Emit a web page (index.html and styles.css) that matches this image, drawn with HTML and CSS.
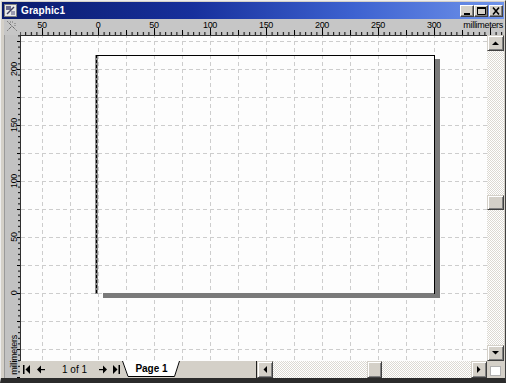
FILE: index.html
```html
<!DOCTYPE html>
<html>
<head>
<meta charset="utf-8">
<title>Graphic1</title>
<link rel="stylesheet" href="styles.css">
</head>
<body>
<div class="window">
  <div class="titlebar">
    <svg class="app-icon" width="13" height="13" viewBox="0 0 13 13">
      <rect x="0.5" y="0.5" width="12" height="12" fill="#e8e8e8" stroke="#808080"/>
      <rect x="2" y="2" width="5" height="4" fill="#6d6d8f"/>
      <path d="M3 10 L10 3" stroke="#404060" stroke-width="1.5"/>
      <rect x="7" y="7" width="4" height="4" fill="#9a9ab0"/>
    </svg>
    <span class="title">Graphic1</span>
    <div class="caption-buttons">
      <button class="cap-btn" aria-label="Minimize">
        <svg width="12" height="10" viewBox="0 0 12 10"><rect x="3" y="7" width="6" height="2" fill="#000"/></svg>
      </button>
      <button class="cap-btn" aria-label="Maximize">
        <svg width="12" height="10" viewBox="0 0 12 10"><path d="M2.5 1.5h8v7h-8z" fill="none" stroke="#000"/><rect x="2" y="1" width="9" height="2" fill="#000"/></svg>
      </button>
      <button class="cap-btn close" aria-label="Close">
        <svg width="12" height="10" viewBox="0 0 12 10"><path d="M3 1.5 L9 8.5 M9 1.5 L3 8.5" stroke="#000" stroke-width="1.6"/></svg>
      </button>
    </div>
  </div>

  <div class="main">
    <div class="corner">
      <svg width="16" height="16" viewBox="0 0 16 16">
        <path d="M3.5 2.5 L12.5 11.5 M3.5 11.5 L8 7" stroke="#404040" stroke-dasharray="1 1" fill="none"/>
        <path d="M6 3 h4 M11 4 v3" stroke="#707070" stroke-dasharray="1 1" fill="none"/>
      </svg>
    </div>

    <div class="hruler">
      <svg width="484" height="16" viewBox="0 0 484 16" class="ruler-svg">
        <defs>
          <pattern id="hs" x="78" y="0" width="5.6" height="16" patternUnits="userSpaceOnUse"><rect width="1" height="16" fill="#000"/></pattern>
          <pattern id="hm" x="78" y="0" width="28" height="16" patternUnits="userSpaceOnUse"><rect width="1" height="16" fill="#000"/></pattern>
          <pattern id="hb" x="78" y="0" width="56" height="16" patternUnits="userSpaceOnUse"><rect width="1" height="16" fill="#000"/></pattern>
        </defs>
        <rect x="0" y="13" width="484" height="3" fill="url(#hs)"/>
        <rect x="0" y="11" width="484" height="5" fill="url(#hm)"/>
        <rect x="0" y="9" width="484" height="7" fill="url(#hb)"/>
        <g class="rl" text-anchor="middle">
          <text x="22" y="8.5">50</text>
          <text x="78" y="8.5">0</text>
          <text x="134" y="8.5">50</text>
          <text x="190" y="8.5">100</text>
          <text x="246" y="8.5">150</text>
          <text x="302" y="8.5">200</text>
          <text x="358" y="8.5">250</text>
          <text x="414" y="8.5">300</text>
        </g>
        <text class="rl" x="483" y="8.5" text-anchor="end">millimeters</text>
      </svg>
    </div>

    <div class="vruler">
      <svg width="16" height="343" viewBox="0 0 16 343" class="ruler-svg">
        <defs>
          <pattern id="vs" x="0" y="258" width="16" height="5.6" patternUnits="userSpaceOnUse"><rect width="16" height="1" fill="#000"/></pattern>
          <pattern id="vm" x="0" y="258" width="16" height="28" patternUnits="userSpaceOnUse"><rect width="16" height="1" fill="#000"/></pattern>
        </defs>
        <rect x="14" y="0" width="2" height="343" fill="url(#vs)"/>
        <rect x="13" y="0" width="3" height="343" fill="url(#vm)"/>
        <g class="rl" text-anchor="middle">
          <text transform="translate(12.5 258) rotate(-90)">0</text>
          <text transform="translate(12.5 202) rotate(-90)">50</text>
          <text transform="translate(12.5 146) rotate(-90)">100</text>
          <text transform="translate(12.5 90) rotate(-90)">150</text>
          <text transform="translate(12.5 34) rotate(-90)">200</text>
          <text transform="translate(12.5 320) rotate(-90)">millimeters</text>
        </g>
      </svg>
    </div>

    <div class="canvas">
      <svg width="466" height="325" viewBox="0 0 466 325">
        <defs>
          <pattern id="grid" x="21" y="5" width="28" height="28" patternUnits="userSpaceOnUse">
            <path d="M0.5 0 V28 M0 0.5 H28" stroke="#cdcdcd" stroke-dasharray="4 3" fill="none"/>
          </pattern>
        </defs>
        <rect width="466" height="325" fill="#fdfdfd"/>
        <rect width="466" height="325" fill="url(#grid)"/>
        <!-- drawing page -->
        <rect x="414" y="23" width="5" height="239" fill="#7a7a7a"/>
        <rect x="82" y="257" width="337" height="5" fill="#7a7a7a"/>
        <rect x="74" y="19" width="3" height="239" fill="#8a8a8a"/>
        <path d="M75.5 19 V258" stroke="#000" stroke-dasharray="3 2"/>
        <rect x="76" y="19" width="338" height="1" fill="#000"/>
        <rect x="413" y="19" width="1" height="239" fill="#000"/>
      </svg>
    </div>

    <div class="vscroll">
      <div class="sbtn vbtn">
        <svg width="7" height="4" viewBox="0 0 7 4"><polygon points="0,4 3.5,0.5 7,4" fill="#000"/></svg>
      </div>
      <div class="track vtrack">
        <div class="pre"></div>
        <div class="thumb vthumb"></div>
        <div class="post"></div>
      </div>
      <div class="sbtn vbtn">
        <svg width="7" height="4" viewBox="0 0 7 4"><polygon points="0,0 7,0 3.5,3.5" fill="#000"/></svg>
      </div>
    </div>

    <div class="status">
      <div class="nav">
        <svg class="nav-first" width="8" height="9" viewBox="0 0 8 9"><rect x="0" y="0" width="1.5" height="9" fill="#000"/><polygon points="7,0 7,9 2.5,4.5" fill="#000"/></svg>
        <svg class="nav-prev" width="8" height="9" viewBox="0 0 8 9"><polygon points="0,4.5 4,0.5 4,8.5" fill="#000"/><rect x="4" y="4" width="4" height="1.2" fill="#000"/></svg>
        <span class="pagecount">1 of 1</span>
        <svg class="nav-next" width="8" height="9" viewBox="0 0 8 9"><rect x="0" y="4" width="4" height="1.2" fill="#000"/><polygon points="8,4.5 4,0.5 4,8.5" fill="#000"/></svg>
        <svg class="nav-last" width="8" height="9" viewBox="0 0 8 9"><polygon points="1,0 1,9 5.5,4.5" fill="#000"/><rect x="6.5" y="0" width="1.5" height="9" fill="#000"/></svg>
      </div>
      <div class="tab">
        <svg class="tab-edge" width="7" height="16" viewBox="0 0 7 16"><polygon points="0,0 7,0 7,16 5.5,16" fill="#fff"/><path d="M0.5 0 L6 15.5 H7" stroke="#000" fill="none"/></svg>
        <span class="tab-label">Page 1</span>
        <svg class="tab-edge" width="6" height="16" viewBox="0 0 6 16"><polygon points="0,0 6,0 0.5,16 0,16" fill="#fff"/><path d="M0 15.5 H0.5 L5.5 0" stroke="#000" fill="none"/></svg>
      </div>
      <div class="filler"></div>
      <div class="hscroll">
        <div class="sbtn hbtn">
          <svg width="4" height="7" viewBox="0 0 4 7"><polygon points="4,0 4,7 0.5,3.5" fill="#000"/></svg>
        </div>
        <div class="track htrack">
          <div class="pre"></div>
          <div class="thumb hthumb"></div>
          <div class="post"></div>
        </div>
        <div class="sbtn hbtn">
          <svg width="4" height="7" viewBox="0 0 4 7"><polygon points="0,0 0,7 3.5,3.5" fill="#000"/></svg>
        </div>
      </div>
    </div>

    <div class="sizebox"><div class="sizebox-inner"></div></div>
  </div>
</div>
</body>
</html>
```
FILE: styles.css
```css
* {
  box-sizing: border-box;
}

html,
body {
  margin: 0;
  padding: 0;
}

body {
  width: 506px;
  height: 383px;
  overflow: hidden;
  background: #d4d0c8;
  font-family: "Liberation Sans", Arial, sans-serif;
}

.window {
  width: 506px;
  height: 383px;
  display: flex;
  flex-direction: column;
  background: #d4d0c8;
  border-style: solid;
  border-width: 1px 1px 5px 1px;
  border-color: #eeeeee #404040 #2b2b2b #eeeeee;
  padding: 1px 1px 0 1px;
}

/* ---------- title bar ---------- */
.titlebar {
  flex: none;
  height: 17px;
  display: flex;
  align-items: center;
  padding-left: 2px;
  background: linear-gradient(90deg, #0a1b6c 0%, #17309c 38%, #3d62d0 70%, #6f93ea 100%);
}

.app-icon {
  flex: none;
  display: block;
}

.title {
  margin-left: 4px;
  color: #ffffff;
  font-weight: bold;
  font-size: 10px;
  letter-spacing: 0.1px;
}

.caption-buttons {
  margin-left: auto;
  margin-right: 1px;
  display: flex;
}

.cap-btn {
  width: 14px;
  height: 12px;
  padding: 0;
  margin: 0;
  display: flex;
  align-items: center;
  justify-content: center;
  background: #d4d0c8;
  border: 1px solid;
  border-color: #ffffff #404040 #404040 #ffffff;
  box-shadow: inset -1px -1px 0 #808080;
}

.cap-btn svg {
  display: block;
}

.cap-btn.close {
  margin-left: 1px;
}

/* ---------- main grid ---------- */
.main {
  margin-left: 2px;
  display: grid;
  grid-template-columns: 16px 467px 17px;
  grid-template-rows: 16px 326px 17px;
  grid-template-areas:
    "corner hruler hruler"
    "vruler canvas vscroll"
    "vruler status sizebox";
}

.corner {
  grid-area: corner;
  background: #c6c6c6;
}

.corner svg,
.ruler-svg,
.canvas svg {
  display: block;
}

.hruler {
  grid-area: hruler;
  background: #c6c6c6;
}

.vruler {
  grid-area: vruler;
  background: #c2c2c2;
  border-left: 1px solid #9a9a9a;
}

.vruler .ruler-svg {
  margin-left: -1px;
}

.rl {
  font-family: "Liberation Sans", Arial, sans-serif;
  font-size: 9px;
  fill: #000;
  letter-spacing: -0.3px;
}

.canvas {
  grid-area: canvas;
  border-top: 1px solid #303030;
  border-left: 1px solid #303030;
  overflow: hidden;
  background: #fdfdfd;
}

/* ---------- scrollbars ---------- */
.sbtn,
.thumb {
  flex: none;
  display: flex;
  align-items: center;
  justify-content: center;
  background: #d4d0c8;
  border: 1px solid;
  border-color: #d4d0c8 #404040 #404040 #d4d0c8;
  box-shadow: inset 1px 1px 0 #ffffff, inset -1px -1px 0 #808080;
}

.sbtn svg {
  display: block;
}

.track {
  flex: 1;
  display: flex;
  background: repeating-conic-gradient(#ffffff 0 25%, #dcd9d2 0 50%) 0 0 / 2px 2px;
}

.vscroll {
  grid-area: vscroll;
  display: flex;
  flex-direction: column;
}

.vbtn {
  width: 17px;
  height: 16px;
}

.vtrack {
  flex-direction: column;
}

.vtrack .pre {
  flex: 144;
}

.vtrack .post {
  flex: 135;
}

.vthumb {
  width: 17px;
  height: 15px;
}

.status {
  grid-area: status;
  display: flex;
  background: #d4d0c8;
}

.nav {
  flex: none;
  width: 102px;
  display: flex;
  align-items: center;
}

.nav svg {
  flex: none;
  display: block;
}

.nav-first {
  margin-left: 3px;
}

.nav-prev {
  margin-left: 6px;
}

.pagecount {
  margin-left: 17px;
  width: 30px;
  font-size: 10px;
  color: #000;
  white-space: nowrap;
}

.nav-next {
  margin-left: 7px;
}

.nav-last {
  margin-left: 5px;
}

.tab {
  flex: none;
  width: 58px;
  height: 16px;
  display: flex;
}

.tab-edge {
  flex: none;
  display: block;
}

.tab-label {
  flex: 1;
  background: #ffffff;
  border-bottom: 1px solid #000;
  font-size: 10px;
  font-weight: bold;
  line-height: 15px;
  text-align: center;
  color: #000;
  white-space: nowrap;
}

.filler {
  flex: 1;
}

.hscroll {
  flex: none;
  width: 231px;
  display: flex;
  border-left: 1px solid #202020;
}

.hbtn {
  width: 16px;
  height: 17px;
}

.htrack .pre {
  flex: 94;
}

.htrack .post {
  flex: 89;
}

.hthumb {
  width: 15px;
  height: 17px;
}

.sizebox {
  grid-area: sizebox;
  background: #d4d0c8;
  display: flex;
  align-items: flex-end;
  justify-content: center;
  padding-bottom: 2px;
}

.sizebox-inner {
  width: 11px;
  height: 10px;
  background: #ffffff;
  border: 1px solid #b0b0b0;
}
```
